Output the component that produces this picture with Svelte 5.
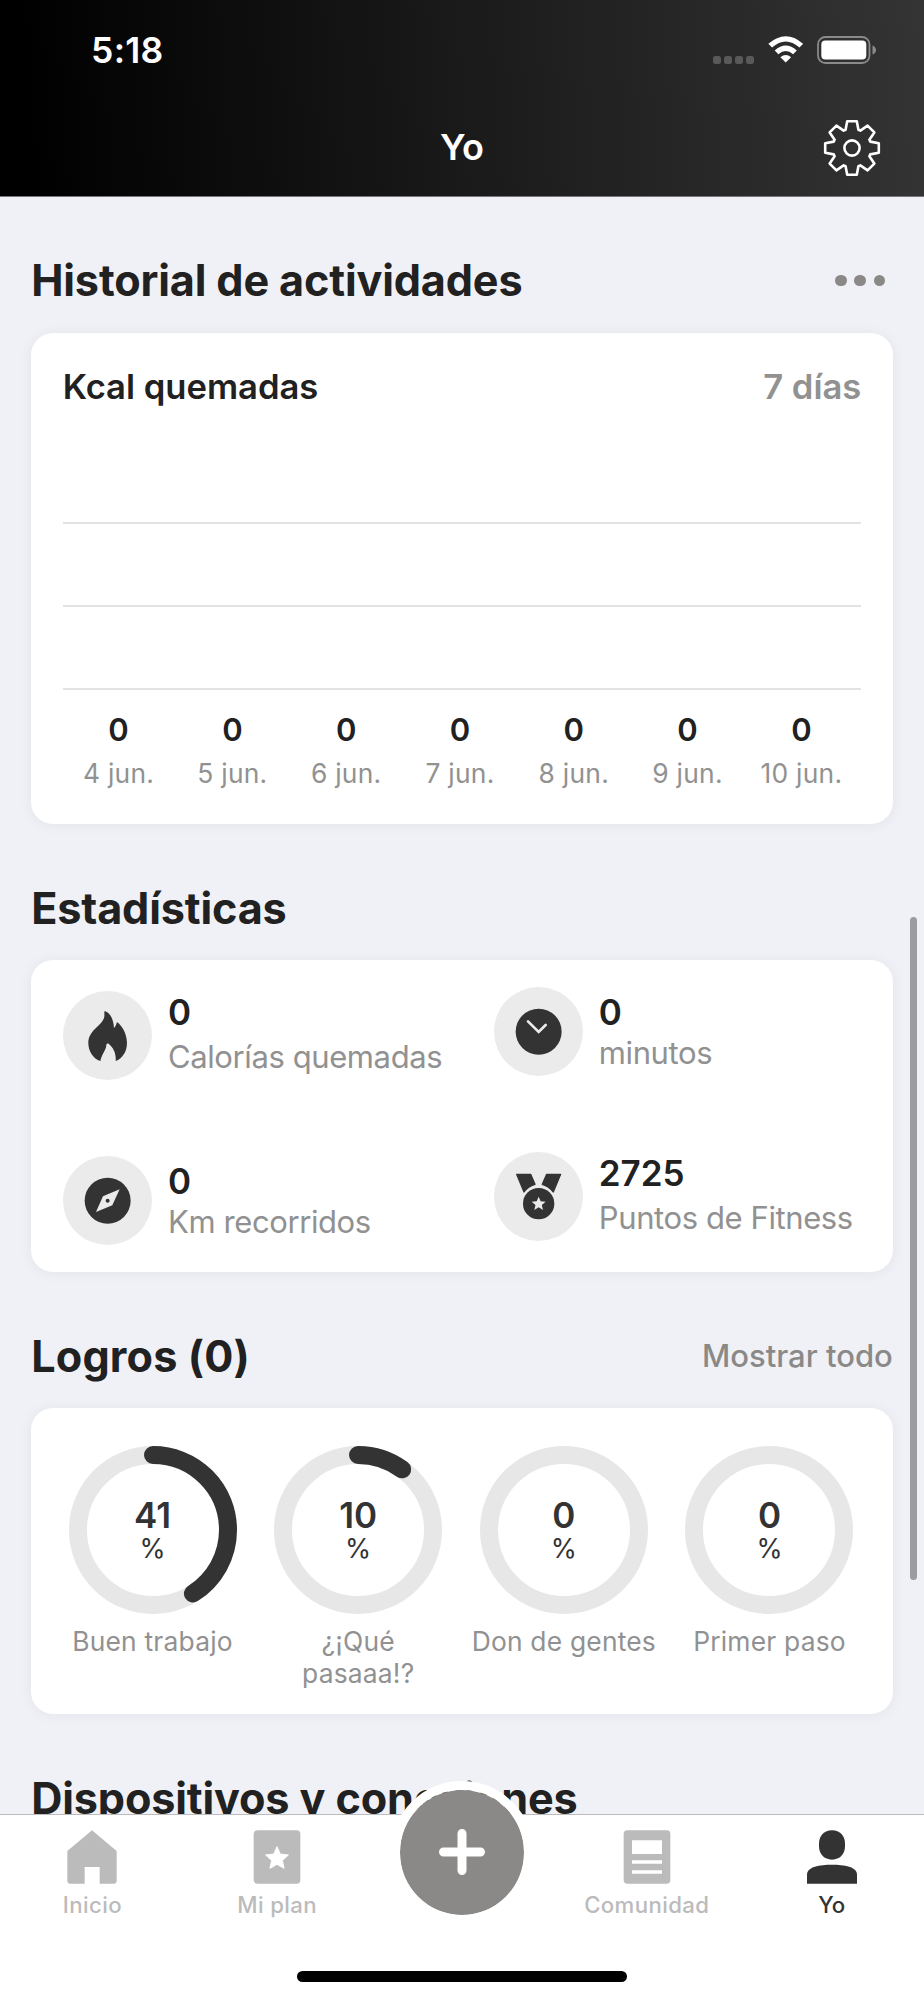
<script>
    const days = [
        { value: 0, label: "4 jun." },
        { value: 0, label: "5 jun." },
        { value: 0, label: "6 jun." },
        { value: 0, label: "7 jun." },
        { value: 0, label: "8 jun." },
        { value: 0, label: "9 jun." },
        { value: 0, label: "10 jun." }
    ];

    const stats = [
        { icon: "flame", value: 0, label: "Calorías quemadas", low: false },
        { icon: "clock", value: 0, label: "minutos", low: true },
        { icon: "compass", value: 0, label: "Km recorridos", low: true },
        { icon: "medal", value: 2725, label: "Puntos de Fitness", low: false }
    ];

    const goals = [
        { percent: 41, label: "Buen trabajo" },
        { percent: 10, label: "¿¡Qué\npasaaa!?" },
        { percent: 0, label: "Don de gentes" },
        { percent: 0, label: "Primer paso" }
    ];

    const radius = 75;
    const circumference = 2 * Math.PI * radius;

    // Eight teeth, each one is the same four points turned by 45 degrees
    function gearPoints() {
        const tooth = [[-6.4, -18.2], [-4.8, -26.8], [4.8, -26.8], [6.4, -18.2]];
        let points = [];
        for (let i = 0; i < 8; i++) {
            const a = (i * Math.PI) / 4;
            for (const [x, y] of tooth) {
                points.push((x * Math.cos(a) - y * Math.sin(a)).toFixed(2) + "," + (x * Math.sin(a) + y * Math.cos(a)).toFixed(2));
            }
        }
        return points.join(" ");
    }

    function starPoints(cx, cy, outer, inner) {
        let points = [];
        for (let i = 0; i < 10; i++) {
            const r = i % 2 ? inner : outer;
            const a = (i * Math.PI) / 5 - Math.PI / 2;
            points.push((cx + r * Math.cos(a)).toFixed(2) + "," + (cy + r * Math.sin(a)).toFixed(2));
        }
        return points.join(" ");
    }
</script>

<div class="screen">
    <header>
        <div class="status">
            <span class="time">5:18</span>
            <div class="signals">
                <div class="cell"><i></i><i></i><i></i><i></i></div>
                <svg class="wifi" viewBox="0 0 106 80">
                    <path d="M1 23 Q53 -22 105 23 L94 34 Q53 -2 12 34 Z" />
                    <path d="M20 43 Q53 13 86 43 L75 54 Q53 35 31 54 Z" />
                    <path d="M37 63 Q53 50 69 63 L53 79 Z" />
                </svg>
                <svg class="battery" viewBox="0 0 60 28">
                    <rect x="1" y="1" width="51.5" height="26" rx="7.5" fill="none" stroke="#8a8a8a" stroke-width="1.8" />
                    <rect x="4.3" y="4.5" width="45" height="19" rx="4" fill="#fff" />
                    <path d="M55.5 9.5 Q59 11 59 14 Q59 17 55.5 18.5 Z" fill="#8a8a8a" />
                </svg>
            </div>
        </div>
        <div class="bar">
            <span></span>
            <h1>Yo</h1>
            <svg class="gear" viewBox="-29 -29 58 58">
                <polygon points={gearPoints()} />
                <circle r="7.6" />
            </svg>
        </div>
    </header>

    <main>
        <div class="title">
            <h2>Historial de actividades</h2>
            <div class="more"><i></i><i></i><i></i></div>
        </div>
        <section class="card history">
            <div class="cardhead">
                <span>Kcal quemadas</span>
                <span class="range">7 días</span>
            </div>
            <div class="lines"><hr><hr><hr></div>
            <div class="days">
                {#each days as day}
                    <div class="day">
                        <b>{day.value}</b>
                        <span>{day.label}</span>
                    </div>
                {/each}
            </div>
        </section>

        <div class="title">
            <h2>Estadísticas</h2>
        </div>
        <section class="card stats">
            {#each stats as stat}
                <div class="stat">
                    <div class="bubble">
                        {#if stat.icon == "flame"}
                            <svg viewBox="-134 -134 268 268">
                                <path d="M-9 -74 C8 -69 18 -48 19 -23 C24 -28 26 -34 28 -41 C46 -28 58 -2 58 22 C58 48 44 69 24 76 C26 52 17 36 3 24 C0 23 -3 24 -4 27 C-4 43 -17 53 -22 76 C-43 70 -58 47 -58 22 C-58 -18 -16 -29 -10 -57 C-9 -64 -11 -69 -9 -74 Z" />
                            </svg>
                        {:else if stat.icon == "clock"}
                            <svg viewBox="-134 -134 268 268">
                                <circle r="69" />
                                <polyline class="hands" points="-32,-31 0,1 21,-20" />
                            </svg>
                        {:else if stat.icon == "compass"}
                            <svg viewBox="-134 -134 268 268">
                                <circle r="69" />
                                <path class="cut" d="M36 -34 L14 14 L-35 34 L-14 -13 Z" />
                                <circle r="6" />
                            </svg>
                        {:else}
                            <svg viewBox="-134 -134 268 268">
                                <path class="ribbon" d="M-66 -67 H-24 L-11 -37 Q-32 -31 -44 -14 Z M24 -67 H66 L44 -14 Q31 -31 11 -37 Z" />
                                <circle cy="21" r="47" />
                                <polygon class="cut" points={starPoints(0, 22, 22, 10)} />
                            </svg>
                        {/if}
                    </div>
                    <div class="stattext" class:low={stat.low}>
                        <b>{stat.value}</b>
                        <span>{stat.label}</span>
                    </div>
                </div>
            {/each}
        </section>

        <div class="title">
            <h2 class="count">Logros (0)</h2>
            <span class="all">Mostrar todo</span>
        </div>
        <section class="card goals">
            {#each goals as goal}
                <div class="goal">
                    <div class="ring">
                        <svg viewBox="0 0 168 168">
                            <circle class="track" cx="84" cy="84" r={radius} />
                            {#if goal.percent > 0}
                                <circle class="progress" cx="84" cy="84" r={radius} stroke-dasharray="{(circumference * goal.percent) / 100} {circumference}" transform="rotate(-90 84 84)" />
                            {/if}
                        </svg>
                        <b>{goal.percent}</b>
                        <small>%</small>
                    </div>
                    <span>{goal.label}</span>
                </div>
            {/each}
        </section>

        <div class="title">
            <h2>Dispositivos y conexiones</h2>
        </div>
        <div class="scrollbar"></div>
    </main>

    <nav>
        <div class="tab">
            <svg viewBox="0 0 150 162">
                <path d="M75 1 L149 63 V152 Q149 161 140 161 H98 V111 H53 V161 H10 Q1 161 1 152 V63 Z" />
            </svg>
            <span>Inicio</span>
        </div>
        <div class="tab">
            <svg viewBox="0 0 150 162">
                <rect x="5" y="1" width="140" height="160" rx="11" />
                <polygon class="star" points={starPoints(75, 86, 36, 17)} />
            </svg>
            <span>Mi plan</span>
        </div>
        <div class="tab">
            <div class="add">
                <svg viewBox="0 0 46 46">
                    <path d="M23 4.5 V41.5 M4.5 23 H41.5" />
                </svg>
            </div>
        </div>
        <div class="tab">
            <svg viewBox="0 0 150 162">
                <path fill-rule="evenodd" d="M16 1 H134 Q145 1 145 12 V150 Q145 161 134 161 H16 Q5 161 5 150 V12 Q5 1 16 1 Z M30 31 V72 H120 V31 Z M30 91 V101 H120 V91 Z M30 121 V131 H120 V121 Z" />
            </svg>
            <span>Comunidad</span>
        </div>
        <div class="tab active">
            <svg viewBox="0 0 150 162">
                <path d="M75 1 C99 1 114 18 114 41 V49 C114 72 99 89 75 89 C51 89 36 72 36 49 V41 C36 18 51 1 75 1 Z" />
                <path d="M0 161 V134 C0 110 38 104 75 104 C112 104 150 110 150 134 V161 Z" />
            </svg>
            <span>Yo</span>
        </div>
        <div class="home"></div>
    </nav>
</div>

<style>
    :global(body) {
        margin: 0;
        background: #f0f1f6;
    }
    .screen {
        display: flex;
        flex-direction: column;
        width: 924px;
        height: 2000px;
        overflow: hidden;
        font-family: Inter, "Liberation Sans", sans-serif;
        color: #212121;
        background: #f0f1f6;
    }
    h1, h2, hr {
        margin: 0;
    }
    svg {
        display: block;
    }

    /* header */
    header {
        height: 196px;
        flex: none;
        color: white;
        background: linear-gradient(86deg, #000 3%, #1a1a1a 50%, #343434 100%);
        border-bottom: 1px solid #77767a;
    }
    .status {
        display: flex;
        justify-content: space-between;
        height: 101px;
        padding: 0 47px 0 91px;
    }
    .time {
        font-size: 35.5px;
        font-weight: 600;
        line-height: 102px;
        letter-spacing: 0.3px;
    }
    .signals {
        display: flex;
        align-items: flex-start;
        padding-top: 36.4px;
    }
    .cell {
        display: flex;
        gap: 3.5px;
        margin: 19.6px 13.5px 0 0;
    }
    .cell i {
        width: 7.6px;
        height: 7.6px;
        border-radius: 2.5px;
        background: #595959;
    }
    .wifi {
        width: 35.5px;
        height: 27px;
        margin-right: 14px;
        fill: white;
    }
    .battery {
        width: 60px;
        height: 28px;
    }
    .bar {
        display: grid;
        grid-template-columns: 1fr auto 1fr;
        align-items: center;
        height: 92px;
        padding: 0 43.5px;
    }
    h1 {
        font-size: 36px;
        font-weight: 600;
        line-height: 93px;
    }
    .gear {
        width: 58px;
        height: 58px;
        justify-self: end;
        fill: none;
        stroke: white;
        stroke-width: 2.6;
        stroke-linejoin: round;
    }

    /* content */
    main {
        position: relative;
        flex: 1;
        min-height: 0;
        overflow: hidden;
        padding: 0 31.2px;
    }
    .title {
        display: flex;
        justify-content: space-between;
        align-items: center;
        height: 60px;
        margin: 54.2px 0 22px;
    }
    .title:first-child {
        margin: 53.4px 0 22.6px;
    }
    h2 {
        font-size: 43.2px;
        font-weight: 700;
        line-height: 60px;
        letter-spacing: -0.15px;
        white-space: nowrap;
    }
    .count {
        letter-spacing: 0.15px;
    }
    .more {
        display: flex;
        gap: 7.5px;
        margin-right: 7.5px;
    }
    .more i {
        width: 11.7px;
        height: 11.7px;
        border-radius: 50%;
        background: #8b8988;
    }
    .all {
        font-size: 31px;
        font-weight: 500;
        color: #8b8988;
    }
    .card {
        box-sizing: border-box;
        background: white;
        border-radius: 22px;
        box-shadow: 0 1px 14px rgba(30, 20, 60, 0.06);
    }

    .history {
        height: 490.6px;
        padding: 31px 31.5px 0;
    }
    .cardhead {
        display: flex;
        justify-content: space-between;
        font-size: 34.6px;
        font-weight: 600;
        line-height: 44px;
    }
    .range {
        color: #919191;
    }
    .lines {
        display: grid;
        gap: 80.8px;
        margin-top: 114px;
    }
    hr {
        height: 2px;
        border: none;
        background: #e3e3e3;
    }
    .days {
        display: grid;
        grid-template-columns: repeat(7, 113.8px);
        margin-left: -1px;
        padding-top: 22.4px;
    }
    .day {
        display: flex;
        flex-direction: column;
        align-items: center;
    }
    .day b {
        font-size: 31px;
        font-weight: 600;
        line-height: 36px;
    }
    .day span {
        margin-top: 9.6px;
        font-size: 26.4px;
        line-height: 30px;
        letter-spacing: 0.25px;
        color: #919191;
    }

    .stats {
        display: grid;
        grid-template-columns: 1fr 1fr;
        grid-auto-rows: 165px;
        height: 312px;
        padding-top: 31px;
    }
    .stat {
        display: flex;
        gap: 16px;
        padding-left: 31.5px;
    }
    .stat:nth-child(even) {
        margin-top: -3.6px;
    }
    .bubble {
        width: 89.3px;
        height: 89.3px;
        flex: none;
        border-radius: 50%;
        background: #ebebeb;
        fill: #333;
    }
    .cut {
        fill: #ebebeb;
    }
    .hands {
        fill: none;
        stroke: #ebebeb;
        stroke-width: 8;
        stroke-linecap: round;
    }
    .ribbon {
        stroke: #333;
        stroke-width: 4;
        stroke-linejoin: round;
    }
    .stattext b {
        display: block;
        box-sizing: border-box;
        height: 46px;
        font-size: 35px;
        font-weight: 600;
        line-height: 43px;
    }
    .stattext.low b {
        padding-top: 4px;
    }
    .stattext span {
        display: block;
        font-size: 31px;
        line-height: 40px;
        letter-spacing: -0.4px;
        color: #919191;
        white-space: nowrap;
    }

    .goals {
        display: grid;
        grid-template-columns: repeat(4, 1fr);
        height: 306px;
        padding: 38px 20.5px 0 18.5px;
    }
    .goal {
        display: flex;
        flex-direction: column;
        align-items: center;
    }
    .goal span {
        margin-top: 11px;
        font-size: 26.4px;
        line-height: 32px;
        letter-spacing: 0.2px;
        text-align: center;
        white-space: pre-line;
        color: #919191;
    }
    .ring {
        position: relative;
        display: flex;
        flex-direction: column;
        align-items: center;
        justify-content: center;
        width: 168px;
        height: 168px;
        color: #333;
    }
    .ring svg {
        position: absolute;
        inset: 0;
    }
    .ring circle {
        fill: none;
        stroke-width: 18;
    }
    .ring .track {
        stroke: #e7e7e7;
    }
    .ring .progress {
        stroke: #333;
        stroke-linecap: round;
    }
    .ring b {
        font-size: 35px;
        font-weight: 600;
        line-height: 36px;
    }
    .ring small {
        font-size: 26.6px;
        line-height: 30px;
    }
    .scrollbar {
        position: absolute;
        top: 720px;
        right: 7px;
        width: 7px;
        height: 663px;
        border-radius: 4px;
        background: #9b9c9f;
    }

    /* tab bar */
    nav {
        position: relative;
        display: grid;
        grid-template-columns: repeat(5, 1fr);
        flex: none;
        height: 185px;
        background: white;
        border-top: 1px solid #bcbcbf;
    }
    .tab {
        display: flex;
        flex-direction: column;
        align-items: center;
        padding-top: 15px;
        font-size: 22.2px;
        font-weight: 450;
        line-height: 28px;
        letter-spacing: 0.4px;
        color: #bbb;
        fill: #bbb;
    }
    .tab > svg {
        width: 50px;
        height: 54px;
        margin-bottom: 6.5px;
    }
    .tab.active {
        color: #333;
        fill: #333;
        letter-spacing: 0;
    }
    .star {
        fill: white;
        stroke: white;
        stroke-width: 3;
        stroke-linejoin: round;
    }
    .add {
        position: absolute;
        top: -34px;
        display: flex;
        align-items: center;
        justify-content: center;
        width: 124.5px;
        height: 124.5px;
        border: 9px solid white;
        border-radius: 50%;
        background: #8b8988;
        background-clip: padding-box;
    }
    .add svg {
        width: 46px;
        height: 46px;
        stroke: white;
        stroke-width: 9;
        stroke-linecap: round;
    }
    .home {
        position: absolute;
        left: 297px;
        bottom: 18px;
        width: 330px;
        height: 11px;
        border-radius: 6px;
        background: black;
    }
</style>
